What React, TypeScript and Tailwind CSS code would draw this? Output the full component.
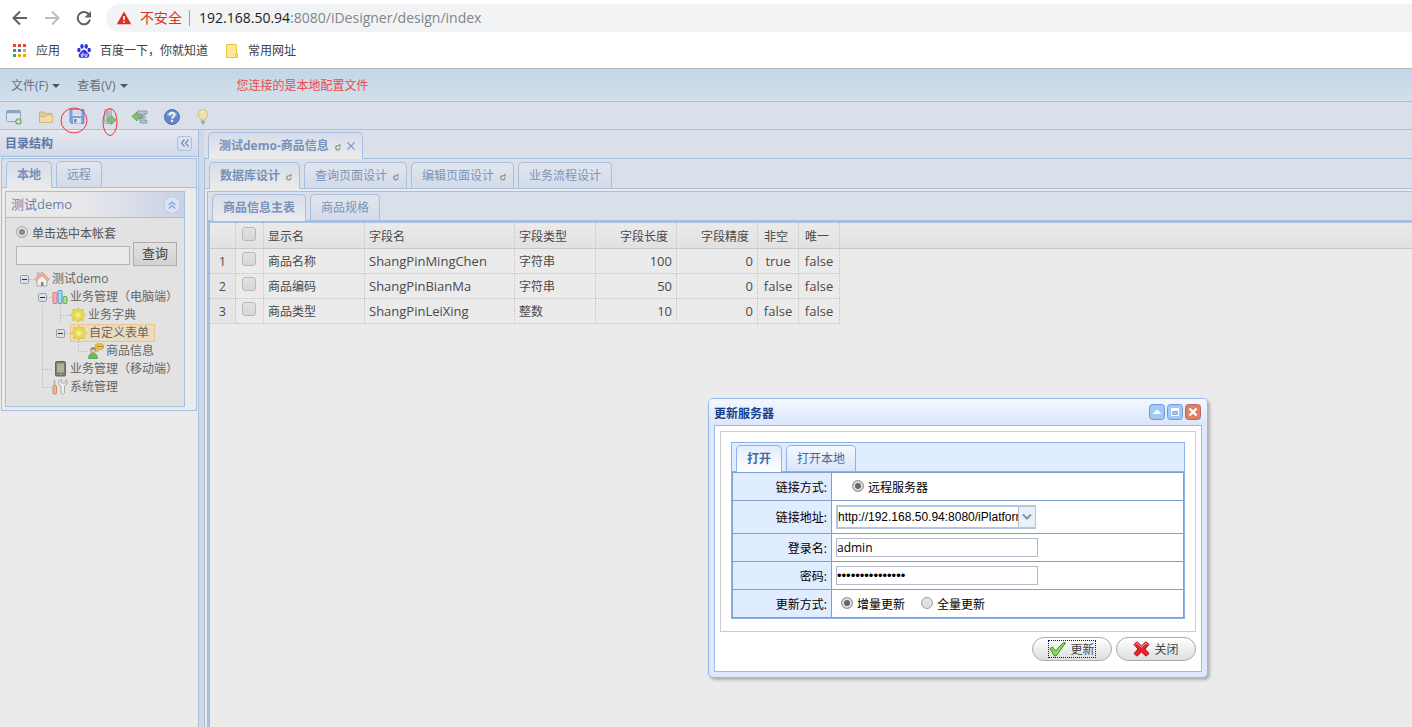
import { useState, type ReactNode } from 'react'
import clsx from 'clsx'

type TabItem = { label: string; refresh?: boolean; close?: boolean }

type TreeNode = {
  label: string
  slots: string[]
  icon: ReactNode
  selected?: boolean
}

function RefreshMark() {
  return (
    <svg className="mt-0.5 ml-1.5 h-2 w-1.5" viewBox="0 0 6 8" fill="none" stroke="#858585" strokeWidth="1.1">
      <path d="M4.900 4.500A2.100 2.100 0 1 1 3 2.700h2.500M4.900.8v2.600" />
    </svg>
  )
}

function Tabs({ items, className, dialog }: { items: TabItem[]; className: string; dialog?: boolean }) {
  const [active, setActive] = useState(0)
  return (
    <div
      className={clsx(
        'flex items-end gap-1 border-b',
        dialog ? 'border-[#8db2e3] bg-[#e0ecff]' : 'border-[#a9bfdf] bg-[#d9e0ea]',
        className
      )}
    >
      {items.map((t, i) => (
        <button
          key={t.label}
          onClick={() => setActive(i)}
          className={clsx(
            'flex items-center rounded-t-[5px] border pl-2.5 text-xs whitespace-nowrap',
            t.refresh ? 'pr-[7px]' : 'pr-2.5',
            dialog ? 'border-[#8db2e3]' : 'border-[#a9bfdf]',
            i === active ? '-mb-px h-[27px] border-b-0 font-bold' : 'h-[26px] border-b-0',
            i === active && dialog && 'bg-linear-to-b from-[#e3ecfd] to-white text-[#416aa3]',
            i === active && !dialog && 'bg-linear-to-b from-[#d7deea] to-[#ebebeb] text-[#7791ba]',
            i !== active && dialog && 'bg-linear-to-b from-[#f5f9ff] to-[#d9e5fb] text-[#416aa3]',
            i !== active && !dialog && 'bg-linear-to-b from-[#e2e6ed] to-[#d3dbe9] text-[#7b93b9]'
          )}
        >
          {t.label}
          {t.refresh && <RefreshMark />}
          {t.close && (
            <svg className="ml-1.5 h-2 w-2" viewBox="0 0 8 8" stroke="#7d9cc9" strokeWidth="1.2">
              <path d="M.5.5l7 7M7.5.5l-7 7" />
            </svg>
          )}
        </button>
      ))}
    </div>
  )
}

// slot codes: "-" minus box, "+" tee, "L" corner, "|" vertical line, " " blank
function Slot({ kind }: { kind: string }) {
  return (
    <svg className="h-[18px] w-[18px] shrink-0" viewBox="0 0 18 18" fill="none" stroke="#bdbdbd" strokeDasharray="1 1">
      {(kind === '|' || kind === '+') && <path d="M8.5 0v18" />}
      {kind === 'L' && <path d="M8.5 0v9" />}
      {(kind === '+' || kind === 'L') && <path d="M9 9.5h9" />}
      {kind === '-' && (
        <g strokeDasharray="none">
          <path d="M13 9.5h5" strokeDasharray="1 1" />
          <rect x="4.5" y="5.5" width="8" height="8" rx="1" fill="#dcdfe3" stroke="#8fa0b3" />
          <path d="M6 9.5h5" stroke="#333" />
        </g>
      )}
    </svg>
  )
}

const HomeIcon = () => (
  <svg className="h-4 w-4" viewBox="0 0 16 16">
    <path d="M3 8v7h10V8L8 3.5z" fill="#f0f0f0" stroke="#aaa" />
    <path d="M3 5V1.5h2V4" fill="#ddd" stroke="#aaa" strokeWidth=".7" />
    <path d="M7 15v-4h2.5v4z" fill="#888" />
    <path d="M.8 8.3L8 1.2l7.2 7.1-1.7 1.4L8 4.5 2.5 9.7z" fill="#efb79a" stroke="#d38a6c" strokeWidth=".8" />
  </svg>
)

const ChartIcon = () => (
  <svg className="h-4 w-4" viewBox="0 0 16 16">
    <rect x="1" y="3.500" width="4" height="11" rx="1" fill="#f0b3bc" stroke="#e2707f" />
    <rect x="6" y="1.500" width="4" height="13" rx="1" fill="#a5d6ee" stroke="#4b9fca" />
    <rect x="11" y="7.500" width="4" height="7" rx="1" fill="#a8dc9b" stroke="#5cae4c" />
  </svg>
)

const GearIcon = () => (
  <svg className="h-4 w-4" viewBox="0 0 16 16">
    <path
      d="M8 .8l1.900 2.500 3.200-.9-.1 3.300 2.500 2.300-2.500 2.300.1 3.300-3.200-.9L8 15.200l-1.900-2.500-3.200.9.1-3.300L.5 8 3 5.700l-.1-3.300 3.200.9z"
      fill="#ebdd45"
      stroke="#cdbb3c"
      strokeWidth=".8"
    />
    <circle cx="8" cy="8" r="3.300" fill="#f3ec8a" stroke="#dccd4a" strokeWidth=".8" />
  </svg>
)

const UserIcon = () => (
  <svg className="h-4 w-4" viewBox="0 0 16 16">
    <path d="M.5 15.500c0-4 2-5 4.500-5s4.500 1 4.500 5z" fill="#67bf55" stroke="#4d9a43" strokeWidth=".7" />
    <circle cx="5" cy="7.500" r="2.600" fill="#edc7a3" stroke="#a5836a" strokeWidth=".7" />
    <path d="M2.300 7c0-3.500 5.500-3.800 5.600 0-2-.8-3.600-1-5.600 0" fill="#858079" />
    <path d="M9 .8h5l1.500 1.500V5L14 6.500h-3L9 9V6.200L7 5V2.300z" fill="#f0c04a" stroke="#cf9a40" strokeWidth=".8" />
    <path d="M9 3.500h1.200m1 0h1.200m1 0h1.200" stroke="#8b5b15" />
  </svg>
)

const PhoneIcon = () => (
  <svg className="h-4 w-4" viewBox="0 0 16 16">
    <rect x="3.500" y=".5" width="10" height="14.500" rx="1" fill="#7b7b7b" stroke="#666" />
    <rect x="5" y="2.500" width="7" height="9" fill="#a9b68f" />
    <path d="M7 13.500h3" stroke="#aaa" />
  </svg>
)

const ToolsIcon = () => (
  <svg className="h-4 w-4" viewBox="0 0 16 16">
    <path d="M2.500 1v5" stroke="#aaa" strokeWidth="1.500" />
    <rect x="1" y="6.500" width="3.500" height="8.500" rx="1.200" fill="#efb494" stroke="#d08a6a" />
    <path d="M7 1v4.500L9 7v7l1.500 1.500L12.500 14V7L15 5V1h-1.500v3h-4V1z" fill="#eee" stroke="#a5a5a5" strokeWidth=".9" />
  </svg>
)

const tree: TreeNode[] = [
  { label: '测试demo', slots: ['-'], icon: <HomeIcon /> },
  { label: '业务管理（电脑端）', slots: [' ', '-'], icon: <ChartIcon /> },
  { label: '业务字典', slots: [' ', '|', '+'], icon: <GearIcon /> },
  { label: '自定义表单', slots: [' ', '|', '-'], icon: <GearIcon />, selected: true },
  { label: '商品信息', slots: [' ', '|', ' ', 'L'], icon: <UserIcon /> },
  { label: '业务管理（移动端）', slots: [' ', '+'], icon: <PhoneIcon /> },
  { label: '系统管理', slots: [' ', 'L'], icon: <ToolsIcon /> },
]

const fields = [
  { name: '商品名称', code: 'ShangPinMingChen', type: '字符串', len: 100, precision: 0, notNull: 'true', unique: 'false' },
  { name: '商品编码', code: 'ShangPinBianMa', type: '字符串', len: 50, precision: 0, notNull: 'false', unique: 'false' },
  { name: '商品类型', code: 'ShangPinLeiXing', type: '整数', len: 10, precision: 0, notNull: 'false', unique: 'false' },
]

const toolbar: { title: string; icon: ReactNode }[] = [
  {
    title: '新建',
    icon: (
      <>
        <rect x=".5" y="1.500" width="14" height="11" rx="1" fill="#dfe5ed" stroke="#8aa3c3" />
        <path d="M1 3h13" stroke="#86a6cf" strokeWidth="2.500" />
        <circle cx="12.500" cy="12.500" r="3.300" fill="#7fae78" />
        <path d="M10.500 12.500h4m-2-2v4" stroke="#eef3ee" strokeWidth="1.200" />
      </>
    ),
  },
  {
    title: '打开',
    icon: (
      <>
        <path d="M1.500 13V3h5l1 1.500h6.500V13z" fill="#e3cd98" stroke="#cdb072" />
        <path d="M1.500 13.500v-6h6L9 6h5.500v7.500z" fill="#eddcb0" stroke="#d4b97a" />
      </>
    ),
  },
  {
    title: '保存',
    icon: (
      <>
        <path d="M1 .5h14v14H2.500L1 13z" fill="#7fa3d8" stroke="#6d93ca" />
        <rect x="3.500" y="1" width="9" height="6" fill="#e0e6ef" />
        <path d="M4 3h8M4 5h8" stroke="#c3ccd9" />
        <rect x="4" y="9" width="8" height="5.500" fill="#dfe4ee" />
        <rect x="5" y="10" width="2.500" height="3.500" fill="#6d84c6" />
      </>
    ),
  },
  {
    title: '更新服务器',
    icon: (
      <>
        <rect x="3.500" y=".5" width="7" height="14" rx="1" fill="#ccd0d6" stroke="#a4a9b2" />
        <path d="M5 3h4M5 5h4M5 7h4" stroke="#9299a4" />
        <path d="M6 9h4V6.500l5 4.500-5 4.500V13H6z" fill="#8abb7c" stroke="#62a055" strokeWidth=".8" />
      </>
    ),
  },
  {
    title: '导入',
    icon: (
      <>
        <path d="M5.500 2h9.500v2.500h-3v7h3V14H8.500v-3H7V9.500h2V5H5.500z" fill="#b9c6d2" stroke="#7f98ad" strokeWidth=".9" />
        <path d="M10.500 5v7M13.500 5.500v6" stroke="#7f98ad" strokeDasharray="1 1" />
        <path d="M9.500 5.800H5V3L0 7.500 5 12V9.200h4.500z" fill="#8abb7c" stroke="#5f9c53" strokeWidth=".8" />
      </>
    ),
  },
  {
    title: '帮助',
    icon: (
      <>
        <circle cx="8" cy="8" r="7.500" fill="#5f86c9" stroke="#4d72b2" />
        <path d="M2.500 6a6 6 0 0 1 11 0c-3 2-8 2-11 0" fill="#8aa9de" />
        <path d="M5.500 6.200C5.500 3 10.600 3 10.600 6c0 1.800-2.500 1.800-2.500 3.800" fill="none" stroke="#f2f5fa" strokeWidth="1.900" />
        <circle cx="8.100" cy="12" r="1.200" fill="#f2f5fa" />
      </>
    ),
  },
  {
    title: '提示',
    icon: (
      <>
        <path d="M8 .7c-3 0-4.800 2.200-4.800 4.600C3.200 8 5.500 8.500 6 11h4c.5-2.500 2.800-3 2.800-5.700C12.800 2.900 11 .7 8 .7z" fill="#eee1ac" stroke="#cfbd82" />
        <path d="M6 4c1-2 2-1.500 2.500-1" stroke="#fff" fill="none" />
        <path d="M6 12h4M6 13.500h4M7 15h2" stroke="#979ba1" />
      </>
    ),
  },
]

function BrowserChrome() {
  return (
    <header className="border-b border-[#b4b4b4] bg-white">
      <div className="flex h-8 items-end">
        <nav className="flex h-7 w-[106px] shrink-0 items-center gap-4 pl-3">
          <button aria-label="后退">
            <svg className="h-4 w-4" viewBox="0 0 16 16" fill="none" stroke="#5f6368" strokeWidth="2">
              <path d="M15 8H2M8 1.500L1.500 8 8 14.500" />
            </svg>
          </button>
          <button aria-label="前进">
            <svg className="h-4 w-4" viewBox="0 0 16 16" fill="none" stroke="#bcbec1" strokeWidth="2">
              <path d="M1 8h13M8 1.500L14.500 8 8 14.500" />
            </svg>
          </button>
          <button aria-label="刷新">
            <svg className="h-4 w-4" viewBox="0 0 16 16">
              <path d="M13.200 4.800A6.200 6.200 0 1 0 14 9.500" fill="none" stroke="#5f6368" strokeWidth="2" />
              <path d="M15 1v6.500H8.500z" fill="#5f6368" />
            </svg>
          </button>
        </nav>
        <div className="flex h-7 flex-1 items-center rounded-l-full bg-[#f1f3f4] pl-2.5 text-sm">
          <svg className="h-4 w-4" viewBox="0 0 16 16">
            <path d="M8 1.500l7.200 12.700H.8z" fill="#d93025" />
            <path d="M8 6v4M8 11.200v1.600" stroke="#fff" strokeWidth="1.600" />
          </svg>
          <span className="ml-2 text-[#d93025]">不安全</span>
          <span className="mr-[9px] ml-[7px] h-4 w-px bg-[#9aa0a6]" />
          <span className="text-[#202124]">
            192.168.50.94<span className="text-[#80868b]">:8080/iDesigner/design/index</span>
          </span>
        </div>
      </div>
      <div className="flex h-9 items-center pt-0.5 pl-3 text-xs text-[#3c4043]">
        <a href="#apps" className="flex items-center gap-2">
          <svg className="h-4 w-4" viewBox="0 0 16 16">
            <path d="M1 1h3v3H1zM6 1h3v3H6zM11 1h3v3h-3z" fill="#ea4335" />
            <path d="M1 6h3v3H1zM1 11h3v3H1z" fill="#34a853" />
            <path d="M6 6h3v3H6z" fill="#1a8cf0" />
            <path d="M11 6h3v3h-3zM6 11h3v3H6zM11 11h3v3h-3z" fill="#f2a60c" />
          </svg>
          应用
        </a>
        <a href="#baidu" className="ml-4 flex items-center gap-2">
          <svg className="h-4 w-4" viewBox="0 0 16 16" fill="#2932e1">
            <ellipse cx="2.900" cy="7" rx="1.700" ry="2.200" />
            <ellipse cx="6" cy="3.400" rx="1.700" ry="2.300" />
            <ellipse cx="10.200" cy="3.400" rx="1.700" ry="2.300" />
            <ellipse cx="13.200" cy="7" rx="1.700" ry="2.200" />
            <path d="M8 6.800c2 0 2.500 2 4.300 3.400 2 1.800.8 4.600-1.300 4.600H5c-2.100 0-3.300-2.800-1.300-4.600C5.500 8.800 6 6.800 8 6.800z" />
            <path d="M7 9.300v4H5.300v-2H7M9 10.500v2.800h2v-2.800" fill="none" stroke="#fff" strokeWidth=".9" />
          </svg>
          百度一下，你就知道
        </a>
        <a href="#folder" className="ml-4 flex items-center gap-2">
          <svg className="h-4 w-4" viewBox="0 0 16 16">
            <path d="M2.500 1.500h10v13h-10z" fill="#ffe793" stroke="#e8c545" />
            <path d="M11.500 10.500h2v4h-2z" fill="#ffe793" stroke="#e8c545" />
          </svg>
          常用网址
        </a>
      </div>
    </header>
  )
}

function Radio({ name, label, checked, className }: { name: string; label: string; checked?: boolean; className?: string }) {
  return (
    <label className={clsx('items-center gap-1', className)}>
      <input
        type="radio"
        name={name}
        defaultChecked={checked}
        className="mb-1 h-3 w-3 shrink-0 appearance-none rounded-full border border-[#a0a0a0] bg-linear-to-b from-[#e6e6e6] to-[#dcdcdc] checked:bg-[#666] checked:bg-none checked:shadow-[inset_0_0_0_2px_#e2e2e2]"
      />
      {label}
    </label>
  )
}

function Sidebar() {
  return (
    <aside className="w-[199px] shrink-0 border-r border-[#a9bfdf] bg-[#ebebeb]">
      <div className="flex h-[27px] items-center justify-between border-b border-[#a9bfdf] bg-linear-to-b from-[#e3e7ee] to-[#d2daea] pr-1.5 pl-[5px]">
        <h2 className="pt-px text-xs font-bold text-[#5d77a6]">目录结构</h2>
        <button aria-label="收起" className="flex h-[15px] w-[15px] items-center justify-center rounded-[3px] border border-[#a9bfdf]">
          <svg className="h-2 w-2" viewBox="0 0 8 8" fill="none" stroke="#6f8fc0" strokeWidth="1.200">
            <path d="M3.500.5L.5 4l3 3.500M7.500.5l-3 3.500 3 3.500" />
          </svg>
        </button>
      </div>
      <div className="mx-px mt-px border border-[#a9bfdf]">
        <Tabs className="h-[29px] pl-1" items={[{ label: '本地' }, { label: '远程' }]} />
        <div className="mt-[3px] mr-[11px] mb-[3px] ml-[3px] border border-[#a9bfdf] bg-[#e2e2e2]">
          <div className="flex h-[26px] items-center justify-between border-b border-[#a9bfdf] bg-linear-to-r from-[#e9e9ea] from-40% to-[#cad2e7] pr-1 pl-[5px]">
            <h3 className="text-[13px] text-[#6d83ab]">测试demo</h3>
            <button aria-label="折叠" className="flex h-4 w-4 items-center justify-center rounded-full bg-[#dde3ef] shadow-[0_0_1px_#8899bb]">
              <svg className="h-2 w-2" viewBox="0 0 8 8" fill="none" stroke="#7d9fe0" strokeWidth="1.200">
                <path d="M.8 4L4 1l3.200 3M.8 7.500l3.200-3 3.200 3" />
              </svg>
            </button>
          </div>
          <div className="px-2.5 pt-1.5 pb-2.5 text-[#666]">
            <Radio name="account" label="单击选中本帐套" checked className="flex h-[18px] pt-0.5 text-xs text-[#555] [&>input]:opacity-70" />
            <div className="flex items-end gap-[3px]">
              <input aria-label="关键字" className="mb-px h-[19px] w-[114px] shrink-0 border border-[#b5b5b5] bg-[#ebebeb] px-1 text-xs" />
              <button className="h-6 w-11 shrink-0 border border-[#adadad] bg-linear-to-b from-[#e2e2e2] to-[#d2d2d2] text-[13px] text-[#444]">查询</button>
            </div>
            <ul className="mt-1 text-xs whitespace-nowrap">
              {tree.map((n) => (
                <li key={n.label} className="flex h-[18px] items-center">
                  {n.slots.map((s, i) => (
                    <Slot key={i} kind={s} />
                  ))}
                  <span
                    className={clsx(
                      'flex h-[18px] items-center gap-0.5',
                      n.selected && 'border border-[#edc58c] bg-[#eadcc0] pr-[5px]'
                    )}
                  >
                    {n.icon}
                    {n.label}
                  </span>
                </li>
              ))}
            </ul>
          </div>
        </div>
      </div>
    </aside>
  )
}

const rule = 'border-r border-b border-dotted border-[#c4c4c4] px-1'
const cell = `${rule} pt-0.5`
const tick =
  'block h-3.5 w-3.5 appearance-none rounded-[3px] border border-[#b8b8b8] bg-linear-to-b from-[#e2e2e2] to-[#d6d6d6] ml-0.5 mb-1'

function FieldGrid() {
  return (
    <div className="bg-linear-to-b from-[#ebebeb] to-[#e1e1e1] bg-[length:100%_25px] bg-no-repeat">
      <table className="w-full table-fixed border-separate border-spacing-0 text-xs text-[#4a4a4a]">
        <colgroup>
          <col className="w-[26px]" />
          <col className="w-7" />
          <col className="w-[101px]" />
          <col className="w-[150px]" />
          <col className="w-[81px]" />
          <col className="w-[81px]" />
          <col className="w-[81px]" />
          <col className="w-[41px]" />
          <col className="w-[41px]" />
          <col />
        </colgroup>
        <thead>
          <tr className="h-[26px] text-left [&>th]:border-b [&>th]:border-b-[#c8c8c8] [&>th]:font-normal [&>th]:[border-bottom-style:solid]">
            <th className={rule} />
            <th className={rule}>
              <input type="checkbox" aria-label="全选" className={tick} />
            </th>
            <th className={cell}>显示名</th>
            <th className={cell}>字段名</th>
            <th className={cell}>字段类型</th>
            <th className={clsx(cell, 'pr-2 text-right')}>字段长度</th>
            <th className={clsx(cell, 'pr-2 text-right')}>字段精度</th>
            <th className={clsx(cell, 'pl-1.5')}>非空</th>
            <th className={clsx(cell, 'pl-1.5')}>唯一</th>
            <th />
          </tr>
        </thead>
        <tbody>
          {fields.map((f, i) => (
            <tr key={f.code} className="h-[25px]">
              <td className={clsx(cell, 'bg-[#e6e6e6] text-center')}>{i + 1}</td>
              <td className={rule}>
                <input type="checkbox" aria-label={f.name} className={tick} />
              </td>
              <td className={cell}>{f.name}</td>
              <td className={clsx(cell, 'text-[13px]')}>{f.code}</td>
              <td className={cell}>{f.type}</td>
              <td className={clsx(cell, 'text-right text-[13px]')}>{f.len}</td>
              <td className={clsx(cell, 'text-right text-[13px]')}>{f.precision}</td>
              <td className={clsx(cell, 'text-center text-[13px]')}>{f.notNull}</td>
              <td className={clsx(cell, 'text-center text-[13px]')}>{f.unique}</td>
              <td />
            </tr>
          ))}
        </tbody>
      </table>
    </div>
  )
}

function UpdateDialog() {
  const label = 'border-r border-b border-[#7f9fcc] bg-[#e0ecff] pt-0.5 pr-1 text-right font-normal'
  const value = 'border-b border-[#7f9fcc] pl-1'
  const box = 'block h-[19px] w-[202px] border border-[#b5b8c8] bg-white'
  return (
    <section
      role="dialog"
      aria-label="更新服务器"
      className="absolute top-[398px] left-[708px] w-[500px] rounded-[5px] border border-[#95b8e7] bg-[#dfe9fb] px-[5px] pb-[5px] text-xs text-black shadow-[2px_2px_3px_#b0b0b0]"
    >
      <div className="-mx-[5px] flex h-[26px] items-center justify-between rounded-t-[4px] bg-linear-to-b from-[#f4f8ff] to-[#dbe6fc] pr-1.5 pl-[5px]">
        <h2 className="pt-[3px] font-bold text-[#15428b]">更新服务器</h2>
        <div className="flex gap-0.5">
          <button aria-label="收起">
            <svg className="h-4 w-4" viewBox="0 0 16 16">
              <rect x=".5" y=".5" width="15" height="15" rx="3" fill="#a3c8f5" stroke="#6b9bdc" />
              <path d="M8 5.500l4.500 4.500h-9z" fill="#fff" />
            </svg>
          </button>
          <button aria-label="最大化">
            <svg className="h-4 w-4" viewBox="0 0 16 16">
              <rect x=".5" y=".5" width="15" height="15" rx="3" fill="#a3c8f5" stroke="#6b9bdc" />
              <path d="M4 4h8v8H4z" fill="#fff" />
              <path d="M5.500 7.500h5v3h-5z" fill="#a3c8f5" stroke="#6b9bdc" strokeWidth=".8" />
            </svg>
          </button>
          <button aria-label="关闭窗口">
            <svg className="h-4 w-4" viewBox="0 0 16 16">
              <rect x=".5" y=".5" width="15" height="15" rx="3" fill="#df8066" stroke="#b9655a" />
              <path d="M4.500 4.500l7 7M11.500 4.500l-7 7" stroke="#fff" strokeWidth="2.400" />
            </svg>
          </button>
        </div>
      </div>
      <form className="border border-[#99bbe8] bg-white p-[5px] pb-2.5" onSubmit={(e) => e.preventDefault()}>
        <div className="border border-[#ccc] p-2.5 pb-3">
          <div className="border border-[#8db2e3]">
            <Tabs dialog className="h-[29px] pl-1" items={[{ label: '打开' }, { label: '打开本地' }]} />
            <table className="w-full border-separate border-spacing-0 border border-b-0 border-[#7f9fcc]">
              <tbody>
                <tr className="h-7">
                  <th className={clsx(label, 'w-[99px]')}>链接方式:</th>
                  <td className={clsx(value, 'pt-[3px]')}>
                    <Radio name="link" label="远程服务器" checked className="ml-4 inline-flex" />
                  </td>
                </tr>
                <tr className="h-[33px]">
                  <th className={label}>
                    <label htmlFor="address">链接地址:</label>
                  </th>
                  <td className={value}>
                    <div className="relative h-6 w-[200px] border-2 border-[#b3c6dc]">
                      <select
                        id="address"
                        className="block h-5 w-full appearance-none bg-white pr-4 font-['Liberation_Sans',sans-serif] text-xs"
                      >
                        <option>http://192.168.50.94:8080/iPlatform</option>
                      </select>
                      <span className="pointer-events-none absolute inset-y-0 -right-px flex w-[17px] items-center justify-center border-l border-[#a9bfd6] bg-[#e8f1fa]">
                        <svg className="h-2 w-2.5" viewBox="0 0 10 8" fill="none" stroke="#8d9299" strokeWidth="2">
                          <path d="M1 1.500l4 4 4-4" />
                        </svg>
                      </span>
                    </div>
                  </td>
                </tr>
                <tr className="h-7">
                  <th className={label}>
                    <label htmlFor="user">登录名:</label>
                  </th>
                  <td className={value}>
                    <input id="user" defaultValue="admin" className={box} />
                  </td>
                </tr>
                <tr className="h-7">
                  <th className={label}>
                    <label htmlFor="password">密码:</label>
                  </th>
                  <td className={value}>
                    <input id="password" type="password" defaultValue="iplatform123456" className={clsx(box, "font-['Liberation_Sans',sans-serif] text-[13px]")} />
                  </td>
                </tr>
                <tr className="h-7">
                  <th className={label}>更新方式:</th>
                  <td className={clsx(value, 'pt-[3px]')}>
                    <Radio name="mode" label="增量更新" checked className="ml-[5px] inline-flex" />
                    <Radio name="mode" label="全量更新" className="ml-4 inline-flex" />
                  </td>
                </tr>
              </tbody>
            </table>
          </div>
        </div>
        <div className="mt-[5px] flex justify-end gap-1 text-[#444]">
          <button className="flex h-6 w-20 items-center justify-center rounded-full border border-[#a9a9a9] bg-linear-to-b from-white to-[#dedede]">
            <span className="flex h-[18px] items-center gap-1 border border-dotted border-[#0000cc]">
              <svg className="h-4 w-[17px]" viewBox="0 0 17 16">
                <path d="M1 7.500l2.500-1.500L6.500 10 14.500 1.500l2 .5L7 15H5.500z" fill="#8ade5a" stroke="#2f8f1f" />
              </svg>
              <span className="pt-px">更新</span>
            </span>
          </button>
          <button type="button" className="flex h-6 w-20 items-center justify-center gap-1 rounded-full border border-[#a9a9a9] bg-linear-to-b from-white to-[#dedede]">
            <svg className="h-4 w-[17px]" viewBox="0 0 17 16">
              <path d="M1 3.500L4 .8 8.500 5 13 .8l3 2.700L12 8l4 4.500-3 2.700L8.500 11 4 15.200 1 12.500 5 8z" fill="#e8242c" stroke="#b3131a" />
              <path d="M2.500 3.500L4 2.200l4.500 4 4.500-4 1.500 1.300" fill="none" stroke="#f79a9a" />
            </svg>
            <span className="pt-px">关闭</span>
          </button>
        </div>
      </form>
    </section>
  )
}

export default function App() {
  return (
    <div className="relative flex min-h-screen flex-col bg-[#ebebeb] font-['Open_Sans','Noto_Sans_CJK_SC',sans-serif]">
      <BrowserChrome />

      <div className="flex h-[33px] items-center border-b border-[#a9bfdf] bg-linear-to-b from-[#c3d6e8] to-[#d3e0ec] pt-px pl-[11px] text-xs text-[#6b6f75]">
        {['文件(F)', '查看(V)'].map((m) => (
          <button key={m} className="mr-[17px] flex items-center gap-1">
            {m}
            <svg className="h-1 w-2" viewBox="0 0 8 4" fill="#555">
              <path d="M0 0h8L4 4z" />
            </svg>
          </button>
        ))}
        <span className="ml-[92px] text-[#f04848]">您连接的是本地配置文件</span>
      </div>

      <div className="relative flex h-7 items-center border-b border-[#a9bfdf] bg-[#d9e0ea] pt-[3px] pl-1.5">
        <div className="flex w-[205px] justify-between">
          {toolbar.map((t) => (
            <button key={t.title} title={t.title}>
              <svg className="h-4 w-4" viewBox="0 0 16 16">
                {t.icon}
              </svg>
            </button>
          ))}
        </div>
        <svg className="pointer-events-none absolute top-[5px] left-[60px] h-[30px] w-[60px]" viewBox="0 0 60 30" fill="none" stroke="#f0303c">
          <ellipse cx="14" cy="13.500" rx="13" ry="12.500" />
          <ellipse cx="50" cy="15" rx="7" ry="13.500" />
        </svg>
      </div>

      <div className="flex flex-1">
        <Sidebar />
        <div className="w-[5px] shrink-0 bg-[#d0d9e6]" />
        <main className="flex min-w-0 flex-1 flex-col">
          <Tabs className="h-[29px] pl-1" items={[{ label: '测试demo-商品信息', refresh: true, close: true }]} />
          <div className="flex flex-1 flex-col border-l border-[#a9bfdf]">
            <Tabs
              className="h-[30px] pl-1"
              items={[
                { label: '数据库设计', refresh: true },
                { label: '查询页面设计', refresh: true },
                { label: '编辑页面设计', refresh: true },
                { label: '业务流程设计' },
              ]}
            />
            <div className="mt-0.5 ml-0.5 flex flex-1 flex-col border-t border-l border-[#a9bfdf]">
              <Tabs className="h-[29px] pl-1" items={[{ label: '商品信息主表' }, { label: '商品规格' }]} />
              <div className="flex-1 border-t-2 border-l-2 border-[#a9bfdf]">
                <FieldGrid />
              </div>
            </div>
          </div>
        </main>
      </div>

      <UpdateDialog />
    </div>
  )
}
